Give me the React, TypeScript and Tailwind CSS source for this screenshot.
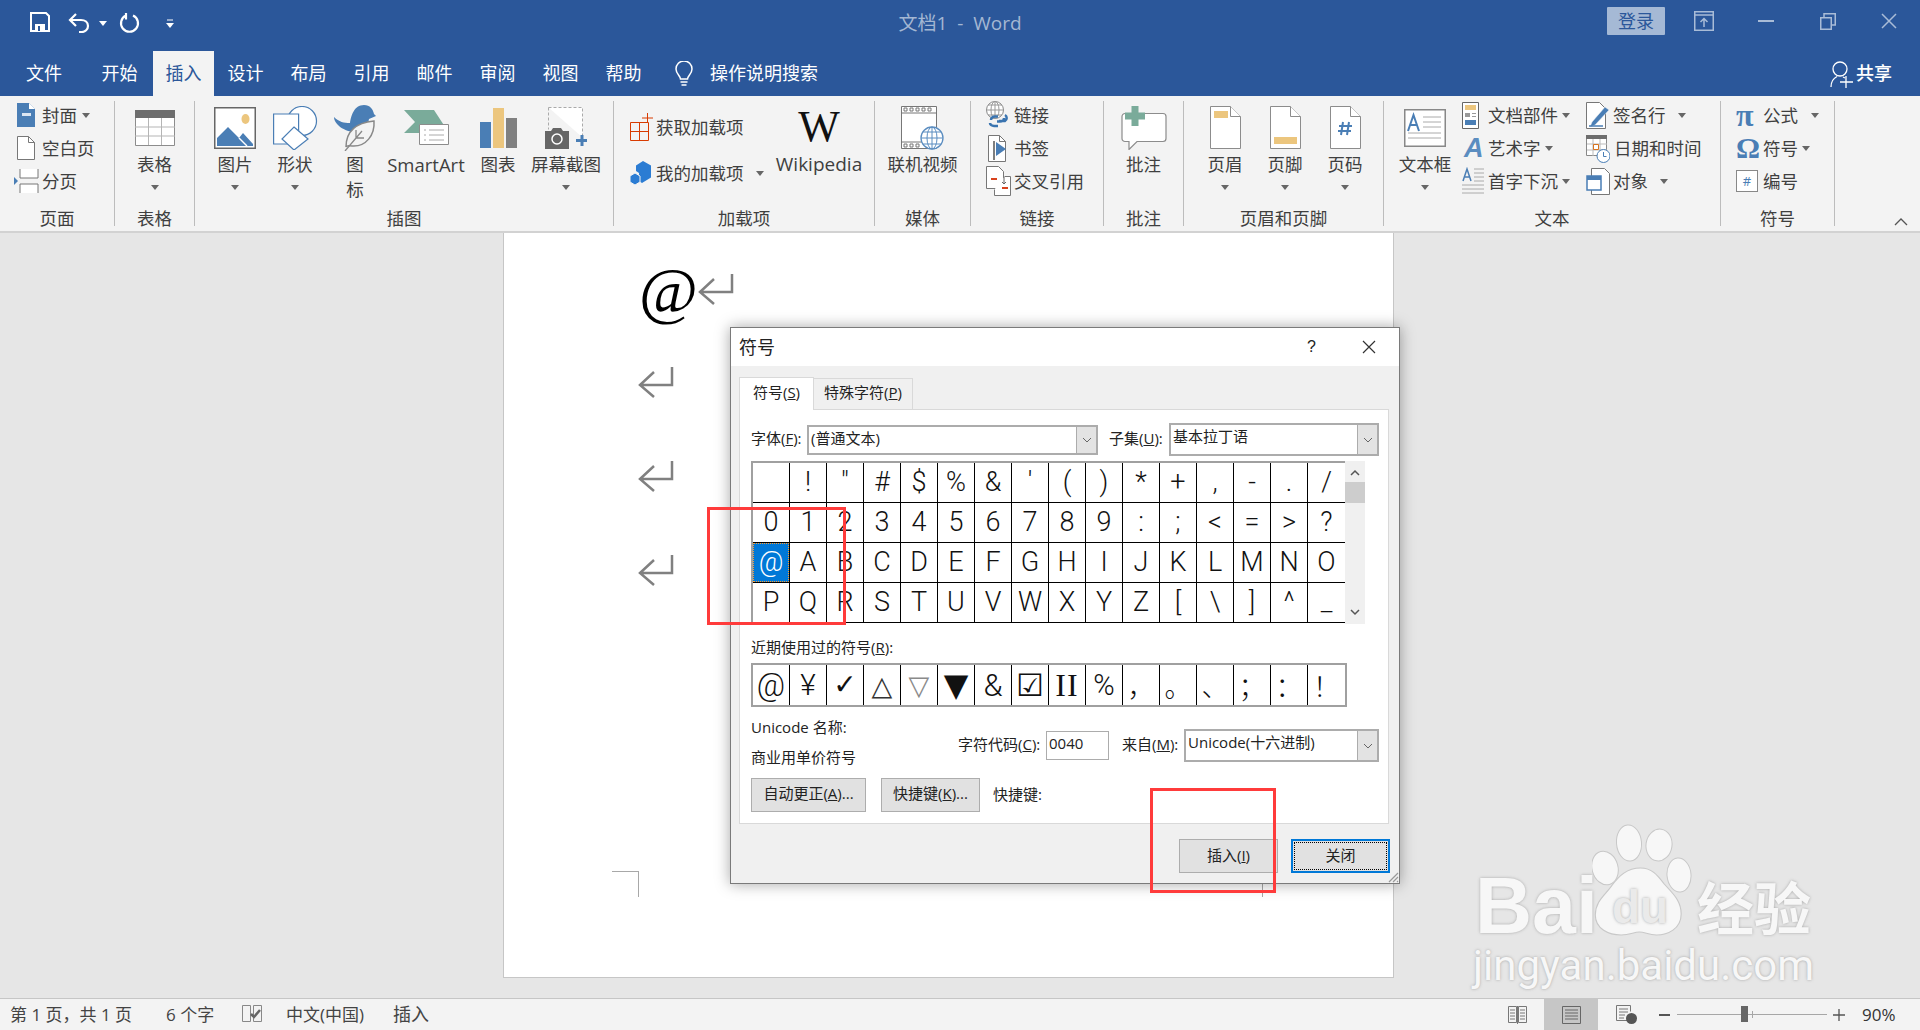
import type { ReactNode } from 'react'

const BLUE = '#4a7eb5'
const TAN = '#ecc67e'
const TEAL = '#7aab9a'
const LINE = '#8c8c8c'

function Icon({ w, h, children, className }: { w: number; h: number; children: ReactNode; className?: string }) {
  return (
    <svg width={w} height={h} viewBox={`0 0 ${w} ${h}`} fill="none" className={className}>
      {children}
    </svg>
  )
}

function Caret({ className = '' }: { className?: string }) {
  return <span className={`inline-block w-0 h-0 border-x-[4px] border-x-transparent border-t-[5px] border-t-[#666] ${className}`} />
}

function BigBtn({ w, icon, lines, arrow, textClass = '' }: { w: string; icon: ReactNode; lines: string[]; arrow?: boolean; textClass?: string }) {
  return (
    <div className={`flex flex-col items-center shrink-0 ${w}`}>
      <div className="h-[49px] flex items-center justify-center">{icon}</div>
      {lines.map((l) => (
        <div key={l} className={`h-[25px] leading-[25px] whitespace-nowrap ${textClass}`}>{l}</div>
      ))}
      {arrow && <div className="h-[20px] flex items-center"><Caret /></div>}
    </div>
  )
}

function SmallBtn({ icon, iconW, label, caret }: { icon: ReactNode; iconW: string; label: string; caret?: string }) {
  return (
    <div className="h-[30px] flex items-center whitespace-nowrap">
      <div className={`flex items-center shrink-0 ${iconW}`}>{icon}</div>
      <span>{label}</span>
      {caret && <Caret className={caret} />}
    </div>
  )
}

function Group({ w, label, children, className = '' }: { w: string; label: string; children: ReactNode; className?: string }) {
  return (
    <div className={`flex flex-col shrink-0 h-[125px] border-r border-[#bcbcbc] ${w}`}>
      <div className={`flex flex-1 min-h-0 pt-[2px] ${className}`}>{children}</div>
      <div className="h-[24px] leading-[24px] text-center -mb-[4px] relative">{label}</div>
    </div>
  )
}

function Stack({ children, w }: { children: ReactNode; w?: string }) {
  return <div className={`flex flex-col gap-[3px] -mt-[3px] shrink-0 ${w ?? ''}`}>{children}</div>
}

function PageDoc({ children }: { children?: ReactNode }) {
  return (
    <Icon w={31} h={43}>
      <path d="M.5.5h20l10 10v32H.5z" fill="#fff" stroke={LINE} />
      <path d="M20.5.5v10h10" fill="#fff" stroke={LINE} />
      {children}
    </Icon>
  )
}

const SYMBOLS = [
  ['', '!', '"', '#', '$', '%', '&', "'", '(', ')', '*', '+', ',', '-', '.', '/'],
  ['0', '1', '2', '3', '4', '5', '6', '7', '8', '9', ':', ';', '<', '=', '>', '?'],
  ['@', 'A', 'B', 'C', 'D', 'E', 'F', 'G', 'H', 'I', 'J', 'K', 'L', 'M', 'N', 'O'],
  ['P', 'Q', 'R', 'S', 'T', 'U', 'V', 'W', 'X', 'Y', 'Z', '[', '\\', ']', '^', '_'],
]

const ROBOTO = "font-['Roboto',sans-serif] font-light"
const DEJAVU = "font-['DejaVu_Sans',sans-serif]"
const CJK = "font-['Noto_Sans_CJK_SC',sans-serif] font-light"

const RECENT = [
  { c: '@', cls: `${ROBOTO} text-[31px]` },
  { c: '¥', cls: `${ROBOTO} text-[30px]` },
  { c: '✓', cls: `${DEJAVU} text-[28px]` },
  { c: '△', cls: `${DEJAVU} text-[27px] text-[#333]` },
  { c: '▽', cls: `${DEJAVU} text-[27px] text-[#8a8a8a]` },
  { c: '▼', cls: `${DEJAVU} text-[32px]` },
  { c: '&', cls: `${ROBOTO} text-[31px]` },
  { c: '☑', cls: `${DEJAVU} text-[31px]` },
  { c: 'II', cls: "font-['Liberation_Serif',serif] text-[32px] tracking-[1px]" },
  { c: '%', cls: `${ROBOTO} text-[29px]` },
  { c: '，', cls: `${CJK} text-[27px]` },
  { c: '。', cls: `${CJK} text-[27px]` },
  { c: '、', cls: `${CJK} text-[27px]` },
  { c: '；', cls: `${CJK} text-[27px]` },
  { c: '：', cls: `${CJK} text-[27px]` },
  { c: '！', cls: `${CJK} text-[27px]` },
]

function ComboBox({ w, h, text }: { w: string; h: string; text: string }) {
  return (
    <div className={`flex shrink-0 bg-white border-2 border-[#acacac] ${w} ${h}`}>
      <div className="flex-1 px-[2px] leading-[23px] whitespace-nowrap overflow-hidden">{text}</div>
      <div className="w-[20px] bg-[#e3e3e3] border-l border-[#acacac] flex items-center justify-center">
        <svg width="10" height="6" viewBox="0 0 10 6" fill="none"><path d="M1 1l4 4 4-4" stroke="#666" /></svg>
      </div>
    </div>
  )
}

function ReturnMark({ className = 'block' }: { className?: string }) {
  return (
    <Icon w={36} h={31} className={className}>
      <path d="M34 0V18H2M16 5L2 18l14 12" stroke="#808080" strokeWidth="2.5" />
    </Icon>
  )
}

export default function App() {
  return (
    <div className="relative w-[1920px] h-[1030px] overflow-hidden flex flex-col bg-[#e6e6e6] text-[#3f3f3f] font-['Open_Sans','Noto_Sans_CJK_SC',sans-serif]">
      {/* Title bar */}
      <div className="h-[51px] shrink-0 bg-[#2b579a] grid grid-cols-[1fr_auto_1fr] items-start">
        <div className="flex items-center h-[44px] pl-[30px]">
          <Icon w={20} h={20}>
            <path d="M1 1h15l3 3v15H1z" stroke="#fff" strokeWidth="2" />
            <path d="M5 12h10v7H5z" fill="#fff" />
            <path d="M8 14h2v5H8z" fill="#2b579a" />
          </Icon>
          <Icon w={24} h={21} className="ml-[18px]">
            <path d="M8 2L2 8l6 6M2 8h11c4 0 7 2.5 7 6s-3 6-6 6h-3" stroke="#fff" strokeWidth="2.2" />
          </Icon>
          <Caret className="ml-[7px] mt-[2px] !border-t-white" />
          <Icon w={21} h={21} className="ml-[12px]">
            <path d="M7 3.5a8.5 8.5 0 1 0 7 0M7 1v6.5" stroke="#fff" strokeWidth="2.2" />
          </Icon>
          <Icon w={8} h={10} className="ml-[26px] mt-[3px]">
            <path d="M1 1h6" stroke="#fff" />
            <path d="M0 4h8L4 9z" fill="#fff" />
          </Icon>
        </div>
        <div className="h-[46px] leading-[46px] text-[19px] text-[#a4b7d3]">文档1 &nbsp;-&nbsp; Word</div>
        <div className="flex items-center justify-end h-[42px] pr-[23px]">
          <div className="w-[58px] h-[28px] rounded-[1px] bg-[#a5b9d5] text-[#2b579a] text-[18px] leading-[28px] text-center">登录</div>
          <Icon w={20} h={20} className="ml-[29px]">
            <rect x=".75" y=".75" width="18.5" height="18.5" stroke="#a9bcd7" strokeWidth="1.5" />
            <path d="M1 4h18M10 16V8M6.5 11L10 7.5 13.5 11" stroke="#a9bcd7" strokeWidth="1.5" />
          </Icon>
          <div className="ml-[44px] w-[16px] h-[2px] bg-[#a9bcd7]" />
          <Icon w={16} h={17} className="ml-[46px]">
            <path d="M.75 4.75h10.5v11.5H.75zM4 4.5V.75h11.25V12h-3.5" stroke="#a9bcd7" strokeWidth="1.5" />
          </Icon>
          <Icon w={16} h={16} className="ml-[45px]">
            <path d="M1 1l14 14M15 1L1 15" stroke="#a9bcd7" strokeWidth="1.5" />
          </Icon>
        </div>
      </div>

      {/* Tabs */}
      <div className="h-[45px] shrink-0 bg-[#2b579a] flex items-center text-white text-[18px]">
        <div className="w-[86px] pl-[2px] text-center">文件</div>
        <div className="w-[67px] text-center">开始</div>
        <div className="w-[61px] h-full leading-[45px] text-center bg-[#f3f3f3] text-[#2b579a]">插入</div>
        {['设计', '布局', '引用', '邮件', '审阅', '视图', '帮助'].map((t) => (
          <div key={t} className="w-[63px] text-center">{t}</div>
        ))}
        <Icon w={18} h={26} className="ml-[20px]">
          <path d="M5.5 18c0-3-4.5-5-4.5-10a8 8 0 0 1 16 0c0 5-4.5 7-4.5 10z" stroke="#fff" strokeWidth="1.5" />
          <path d="M5.5 21h7M6.5 24h5" stroke="#fff" strokeWidth="1.5" />
        </Icon>
        <div className="ml-[17px]">操作说明搜索</div>
        <div className="ml-auto flex items-center pr-[28px]">
          <Icon w={24} h={28}>
            <circle cx="10" cy="9" r="7" stroke="#fff" strokeWidth="1.3" />
            <path d="M1 27c0-6 3-9 6-10.5M13 17l2 1M16 16v12M10 22h13" stroke="#fff" strokeWidth="1.3" />
          </Icon>
          <span className="ml-[2px] font-medium">共享</span>
        </div>
      </div>

      {/* Ribbon */}
      <div className="h-[135px] shrink-0 bg-[#f3f3f3] flex pt-[5px] text-[17.5px] relative">
        <Group w="w-[115px]" label="页面" className="pl-[14px]">
          <Stack>
            <SmallBtn iconW="w-[28px] pl-[3px]" label="封面" caret="ml-[5px]" icon={
              <Icon w={18} h={24}>
                <path d="M0 0h12l6 6v18H0z" fill={BLUE} />
                <path d="M12 0v6h6z" fill="#fff" />
                <path d="M5 10h9v3H5z" fill="#dbe6f2" />
              </Icon>
            } />
            <SmallBtn iconW="w-[28px] pl-[3px]" label="空白页" icon={
              <Icon w={18} h={24}>
                <path d="M.5.5h11l6 6v17H.5z" fill="#fff" stroke="#777" />
                <path d="M11.5.5v6h6" stroke="#777" />
              </Icon>
            } />
            <SmallBtn iconW="w-[28px]" label="分页" icon={
              <Icon w={25} h={24}>
                <path d="M6 0v9h18V0M6 24v-9h18v9" fill="#fff" stroke="#777" />
                <path d="M0 8l4 4-4 4z" fill={BLUE} />
              </Icon>
            } />
          </Stack>
        </Group>

        <Group w="w-[80px]" label="表格">
          <BigBtn w="w-[79px]" lines={['表格']} arrow icon={
            <Icon w={40} h={36}>
              <path d="M.5.5h39v35H.5z" fill="#fff" stroke="#8c8c8c" />
              <path d="M0 0h40v8H0z" fill="#6d6d6d" />
              <path d="M13.5 8v27M26.5 8v27M0 17h40M0 26h40" stroke="#b5b5b5" />
            </Icon>
          } />
        </Group>

        <Group w="w-[419px]" label="插图" className="pl-[10px]">
          <BigBtn w="w-[60px]" lines={['图片']} arrow icon={
            <Icon w={42} h={42}>
              <rect x=".75" y=".75" width="40.5" height="40.5" fill="#fff" stroke="#666" strokeWidth="1.5" />
              <ellipse cx="31.5" cy="12" rx="4" ry="5" fill={TAN} />
              <path d="M3 39v-8l11-11 11 11 4-5 10 11v2z" fill={BLUE} />
              <path d="M25 31l8 8" stroke="#fff" strokeWidth="1.5" />
            </Icon>
          } />
          <BigBtn w="w-[60px]" lines={['形状']} arrow icon={
            <Icon w={45} h={44}>
              <circle cx="29" cy="15" r="14.5" fill="#fff" stroke={BLUE} strokeWidth="1.2" />
              <path d="M.6 8h25v30H.6z" fill="#fff" stroke={BLUE} strokeWidth="1.2" />
              <path d="M21 21l14 12-14 11L9 33z" fill="#fff" stroke={BLUE} strokeWidth="1.2" />
            </Icon>
          } />
          <BigBtn w="w-[60px]" lines={['图', '标']} icon={
            <Icon w={42} h={46}>
              <path d="M30 0c6 0 9 4 10 9l2 2-7 3c-1 8-7 13-13 13C10 27 0 19 0 12c5 5 10 6 16 6 1-7 4-18 14-18z" fill={BLUE} />
              <path d="M12 42c0-14 8-24 28-26 1 14-8 26-22 25-3 0-5-1-6 1z" fill="#f3f3f3" stroke="#888" strokeWidth="1.5" />
              <path d="M11 46l17-20M22 33v-8M22 33h8" stroke="#888" strokeWidth="1.3" />
            </Icon>
          } />
          <BigBtn w="w-[82px]" lines={['SmartArt']} textClass="text-[18.5px]" icon={
            <Icon w={45} h={35}>
              <path d="M0 0h30l15 23H0l11-11z" fill={TEAL} />
              <path d="M15.5 14.5h29v20h-29z" fill="#fff" stroke="#8c8c8c" />
              <path d="M20 20h2M25 20h15M20 25h2M25 25h15M20 30h2M25 30h15" stroke="#aaa" />
            </Icon>
          } />
          <BigBtn w="w-[62px]" lines={['图表']} icon={
            <Icon w={37} h={40}>
              <path d="M0 14h11v26H0z" fill={BLUE} />
              <path d="M13 0h11v40H13z" fill={TAN} />
              <path d="M26 10h11v30H26z" fill="#808080" />
            </Icon>
          } />
          <BigBtn w="w-[74px]" lines={['屏幕截图']} arrow icon={
            <Icon w={43} h={42}>
              <path d="M3.5.5h34v30" fill="#fff" stroke="#aaa" strokeDasharray="3 2" />
              <path d="M3.5.5v22" stroke="#aaa" strokeDasharray="3 2" />
              <path d="M0 42V24h6l2-3h8l2 3h6v18z" fill="#666" />
              <circle cx="12" cy="32" r="5" fill="#666" stroke="#fff" strokeWidth="1.5" />
              <path d="M37 28v11M31 33.5h11" stroke={BLUE} strokeWidth="3" />
            </Icon>
          } />
        </Group>

        <Group w="w-[261px]" label="加载项" className="pl-[16px]">
          <div className="flex flex-col w-[144px] shrink-0 pt-[9px] gap-[16px]">
            <div className="h-[30px] flex items-center">
              <Icon w={23} h={28} className="mr-[3px]">
                <path d="M.5 9.5h18v18H.5zM9.5 9.5v18M.5 18.5h18" stroke="#d83b01" />
                <path d="M17.5 0v10M12 5h11" stroke="#d83b01" />
              </Icon>
              <span>获取加载项</span>
            </div>
            <div className="h-[30px] flex items-center">
              <Icon w={22} h={25} className="mr-[4px]">
                <path d="M13 0l8 4.5v12L12 22l-3-2v-8l-3-2V4.5z" fill="#2b7cd3" />
                <path d="M5 12l5 3v6l-5 3-5-3v-6z" fill="#2b7cd3" stroke="#f3f3f3" />
              </Icon>
              <span>我的加载项</span>
              <Caret className="ml-[12px]" />
            </div>
          </div>
          <BigBtn w="w-[90px]" lines={['Wikipedia']} textClass="text-[19px]" icon={
            <span className="block font-['Liberation_Serif',serif] text-[44px] leading-[44px] text-[#111] mt-[-2px]">W</span>
          } />
        </Group>

        <Group w="w-[96px]" label="媒体">
          <BigBtn w="w-[95px]" lines={['联机视频']} icon={
            <Icon w={43} h={44}>
              <path d="M.5.5h35v42H.5z" fill="#fff" stroke="#777" />
              <path d="M1 7h35M1 36h35" stroke="#777" />
              <path d="M3 2h3v3H3zM9 2h3v3H9zM15 2h3v3h-3zM21 2h3v3h-3zM27 2h3v3h-3zM3 38h3v3H3zM9 38h3v3H9zM15 38h3v3h-3z" stroke="#777" />
              <circle cx="31" cy="32" r="11" fill="#fff" stroke="#5b8dc0" strokeWidth="1.3" />
              <path d="M20 32h22M31 21v22M22.5 26h17M22.5 38h17" stroke="#5b8dc0" />
              <ellipse cx="31" cy="32" rx="5" ry="11" stroke="#5b8dc0" />
            </Icon>
          } />
        </Group>

        <Group w="w-[133px]" label="链接" className="pl-[15px]">
          <Stack>
            <SmallBtn iconW="w-[28px]" label="链接" icon={
              <Icon w={23} h={28}>
                <circle cx="9" cy="9" r="8.5" fill="#fff" stroke="#888" />
                <path d="M0 9h18M9 0v18M2 4h14M2 14h14" stroke="#999" />
                <ellipse cx="9" cy="9" rx="4" ry="8.5" stroke="#999" />
                <path d="M5 19a4 3.5 0 0 1 4-3.5h3M18 17a4 3.5 0 0 1-4 3.5h-3M4 22a4 3 0 0 0 4 3h4M13 20h6a3.5 3.5 0 0 0 0-6" stroke="#3a74b0" strokeWidth="2.5" />
              </Icon>
            } />
            <SmallBtn iconW="w-[28px] pl-[2px]" label="书签" icon={
              <Icon w={18} h={27}>
                <path d="M.5.5h11l6 6v20H.5z" fill="#fff" stroke="#777" />
                <path d="M11.5.5v6h6" stroke="#777" />
                <path d="M6 6v19" stroke="#555" strokeWidth="1.5" />
                <path d="M8 7l10 7-10 7z" fill={BLUE} />
              </Icon>
            } />
            <SmallBtn iconW="w-[28px]" label="交叉引用" icon={
              <Icon w={25} h={30}>
                <path d="M.5.5h12l5 5v17H.5z" fill="#fff" stroke="#777" />
                <path d="M8.5 23.5v6h16v-19h-6" stroke="#777" fill="#fff" />
                <path d="M5 13h6M16 22h6" stroke="#d8431e" strokeWidth="2" />
                <path d="M18 11v7M16 16l2 2 2-2" stroke="#666" />
              </Icon>
            } />
          </Stack>
        </Group>

        <Group w="w-[80px]" label="批注">
          <BigBtn w="w-[79px]" lines={['批注']} icon={
            <Icon w={46} h={44}>
              <path d="M4 7.5h38a3 3 0 0 1 3 3v22a3 3 0 0 1-3 3H16l-8 8v-8H4a3 3 0 0 1-3-3v-22a3 3 0 0 1 3-3z" fill="#fff" stroke="#8c8c8c" strokeWidth="1.2" />
              <path d="M14 0v20M4 10h20" stroke={TEAL} strokeWidth="7" />
            </Icon>
          } />
        </Group>

        <Group w="w-[200px]" label="页眉和页脚" className="pl-[11px]">
          <BigBtn w="w-[60px]" lines={['页眉']} arrow icon={
            <PageDoc><path d="M4 5h14v7H4z" fill={TAN} /></PageDoc>
          } />
          <BigBtn w="w-[60px]" lines={['页脚']} arrow icon={
            <PageDoc><path d="M4 31h23v7H4z" fill={TAN} /></PageDoc>
          } />
          <BigBtn w="w-[60px]" lines={['页码']} arrow icon={
            <PageDoc>
              <path d="M13 16l-2 13M19 16l-2 13M9 20h13M8 25h13" stroke={BLUE} strokeWidth="2" />
            </PageDoc>
          } />
        </Group>

        <Group w="w-[337px]" label="文本" className="pl-[4px]">
          <BigBtn w="w-[74px]" lines={['文本框']} arrow icon={
            <Icon w={42} h={38}>
              <path d="M.75.75h40.5v36.5H.75z" fill="#fff" stroke="#888" strokeWidth="1.5" />
              <path d="M4 22L9.5 6l5.5 16M6 16h7" stroke={BLUE} strokeWidth="2" />
              <path d="M19 8h18M19 13h18M19 18h18M4 24h33M4 29h33" stroke="#aaa" />
            </Icon>
          } />
          <Stack w="w-[124px]">
            <SmallBtn iconW="w-[26px]" label="文档部件" caret="ml-[4px]" icon={
              <Icon w={17} h={27}>
                <path d="M.5.5h16v26H.5z" fill="#fff" stroke="#666" />
                <path d="M3 3h11v5H3z" fill={TAN} />
                <path d="M3 11h5v4H3zM10 11h4v1h-4zM10 14h4v1h-4z" fill="#999" />
                <path d="M3 18h11v5H3z" fill={BLUE} />
              </Icon>
            } />
            <SmallBtn iconW="w-[26px] pl-[2px]" label="艺术字" caret="ml-[4px]" icon={
              <span className="font-['Liberation_Sans',sans-serif] italic font-bold text-[27px] leading-[27px] text-[#5b8dc0]">A</span>
            } />
            <SmallBtn iconW="w-[26px]" label="首字下沉" caret="ml-[4px]" icon={
              <Icon w={22} h={28}>
                <path d="M1 14L5 2l4 12M2.5 10h5" stroke={BLUE} strokeWidth="1.5" />
                <path d="M12 2h10M12 6h10M12 10h10M12 14h10M0 18h22M0 22h22M0 26h22" stroke="#aaa" />
              </Icon>
            } />
          </Stack>
          <Stack>
            <SmallBtn iconW="w-[27px]" label="签名行" caret="ml-[12px]" icon={
              <Icon w={24} h={27}>
                <path d="M.5.5h13l6 6v20H.5z" fill="#fff" stroke="#777" />
                <path d="M4 25l2-5L19 5l4 3L9 23z" fill={BLUE} stroke="#f3f3f3" strokeWidth=".5" />
                <path d="M3 24h14" stroke={BLUE} strokeWidth="1.5" />
              </Icon>
            } />
            <SmallBtn iconW="w-[28px]" label="日期和时间" icon={
              <Icon w={24} h={30}>
                <path d="M.5 2.5h20v20H.5z" fill="#fff" stroke="#888" />
                <path d="M0 2h21v4H0z" fill="#6d6d6d" />
                <path d="M7 6v17M14 6v17M1 11h20M1 17h20" stroke="#bbb" />
                <path d="M7.5 11.5h5v5h-5z" stroke="#d8731e" />
                <circle cx="17.5" cy="23" r="6.5" fill="#fff" stroke={BLUE} />
                <path d="M17.5 19v4.5h3" stroke={BLUE} />
              </Icon>
            } />
            <SmallBtn iconW="w-[27px]" label="对象" caret="ml-[12px]" icon={
              <Icon w={24} h={27}>
                <path d="M5.5.5h13l5 5v21h-18z" fill="#fff" stroke="#777" />
                <path d="M1 8h14v14H1z" fill="#fff" stroke={BLUE} strokeWidth="1.5" />
                <path d="M1 8h14v4H1z" fill={BLUE} />
              </Icon>
            } />
          </Stack>
        </Group>

        <Group w="w-[114px]" label="符号" className="pl-[15px]">
          <Stack>
            <SmallBtn iconW="w-[27px]" label="公式" caret="ml-[13px]" icon={
              <span className="font-['Liberation_Serif',serif] font-bold text-[32px] leading-[30px] text-[#4a7eb5]">π</span>
            } />
            <SmallBtn iconW="w-[27px]" label="符号" caret="ml-[4px]" icon={
              <span className="font-['Liberation_Serif',serif] font-bold text-[30px] leading-[30px] text-[#4a7eb5]">Ω</span>
            } />
            <SmallBtn iconW="w-[27px]" label="编号" icon={
              <span className="flex items-center justify-center w-[22px] h-[22px] bg-white border border-[#888] text-[13px] leading-[13px] text-[#4a7eb5]">#</span>
            } />
          </Stack>
        </Group>

        <div className="flex-1 flex items-end justify-end pr-[12px] pb-[5px]">
          <Icon w={14} h={9}><path d="M1 8l6-6 6 6" stroke="#555" strokeWidth="1.3" /></Icon>
        </div>
      </div>

      {/* Document area */}
      <div className="flex-1 min-h-0 pl-[503px] border-t-2 border-[#d2d2d2]">
        <div className="w-[891px] h-[745px] bg-white border-x border-b border-[#c6c6c6] pt-[37px] pl-[135px] box-border">
          <div className="flex items-start h-[54px]">
            <span className="w-[59px] -mt-[9px] font-['Liberation_Serif',serif] text-[64px] leading-[60px] text-black">@</span>
            <ReturnMark className="block mt-[4px] shrink-0" />
          </div>
          <div className="flex flex-col gap-[63px] mt-[43px] -ml-[1px]">
            <ReturnMark />
            <ReturnMark />
            <ReturnMark />
          </div>
          <div className="flex mt-[285px] -ml-[27px]">
            <div className="w-[27px] h-[26px] border-t border-r border-[#a8a8a8]" />
            <div className="w-[26px] h-[26px] ml-[623px] border-t border-l border-[#a8a8a8]" />
          </div>
        </div>
      </div>

      {/* Status bar */}
      <div className="h-[32px] shrink-0 bg-[#f3f3f3] border-t border-[#c6c6c6] flex items-center text-[17px] text-[#444]">
        <div className="w-[166px] pl-[10px] whitespace-nowrap">第 1 页，共 1 页</div>
        <div className="w-[76px] whitespace-nowrap">6 个字</div>
        <div className="w-[44px]">
          <Icon w={21} h={19}>
            <path d="M.5.5h8v16h-8zM11.5.5h8v16h-8z" stroke="#888" />
            <path d="M9 9l3 3 6-7" stroke="#666" strokeWidth="2.5" />
          </Icon>
        </div>
        <div className="w-[107px] whitespace-nowrap">中文(中国)</div>
        <div className="text-[18px]">插入</div>
        <div className="ml-auto flex items-center h-full pr-[25px]">
          <Icon w={19} h={18} className="mr-[17px]">
            <path d="M.5.5h8v16h-8zM10.5.5h8v16h-8zM9.5 0v18M2 4h5M2 7h5M2 10h5M2 13h5M12 4h5M12 7h5M12 10h5M12 13h5" stroke="#777" />
          </Icon>
          <div className="w-[54px] h-full bg-[#c6c6c6] flex items-center justify-center">
            <Icon w={19} h={18}>
              <path d="M.5.5h18v17H.5zM3 4h13M3 7h13M3 10h13M3 13h13" stroke="#666" />
            </Icon>
          </div>
          <Icon w={21} h={19} className="ml-[18px]">
            <path d="M12 15.500H.5V.5h14v6M3 4h9M3 7h9M3 10h6M3 13h5" stroke="#777" />
            <circle cx="15.5" cy="13.5" r="5.5" fill="#555" />
          </Icon>
          <div className="ml-[22px] w-[11px] h-[2px] bg-[#555]" />
          <div className="ml-[7px] w-[150px] h-[1px] bg-[#a6a6a6] relative">
            <div className="absolute left-[64px] -top-[8px] w-[7px] h-[16px] bg-[#666]" />
            <div className="absolute left-[75px] -top-[3px] w-[1px] h-[7px] bg-[#a6a6a6]" />
          </div>
          <Icon w={12} h={12} className="ml-[6px]">
            <path d="M6 0v12M0 6h12" stroke="#555" strokeWidth="1.3" />
          </Icon>
          <div className="ml-[17px] w-[33px] text-[17px] text-[#333] whitespace-nowrap">90%</div>
        </div>
      </div>

      {/* Symbol dialog */}
      <div className="absolute left-[730px] top-[327px] w-[670px] h-[557px] flex flex-col border border-[#7a7a7a] bg-[#f0f0f0] shadow-[0_0_14px_rgba(0,0,0,0.35)] text-[15px] text-[#222]">
        <div className="h-[38px] shrink-0 bg-white flex items-center pl-[8px] text-[18px]">
          <span>符号</span>
          <span className="ml-auto text-[16px] mr-[46px] font-['Liberation_Sans',sans-serif]">?</span>
          <Icon w={14} h={14} className="mr-[23px]"><path d="M1 1l12 12M13 1L1 13" stroke="#333" strokeWidth="1.2" /></Icon>
        </div>
        <div className="flex-1 flex flex-col pl-[8px] pr-[10px] pt-[10px]">
          <div className="flex items-end h-[33px] shrink-0">
            <div className="w-[75px] h-[33px] leading-[29px] text-center bg-white border border-b-0 border-[#d9d9d9] relative -mb-px z-10 whitespace-nowrap">符号(<u>S</u>)</div>
            <div className="w-[99px] h-[31px] leading-[27px] text-center bg-[#f0f0f0] border border-l-0 border-b-0 border-[#d9d9d9] whitespace-nowrap">特殊字符(<u>P</u>)</div>
          </div>
          <div className="h-[415px] shrink-0 bg-white border border-[#d9d9d9] pl-[11px] pt-[13px]">
            <div className="flex items-center h-[33px]">
              <span className="w-[56px] shrink-0 whitespace-nowrap -mt-[3px]">字体(<u>F</u>):</span>
              <ComboBox w="w-[291px]" h="h-[30px]" text="(普通文本)" />
              <span className="w-[60px] ml-[11px] shrink-0 whitespace-nowrap -mt-[2px]">子集(<u>U</u>):</span>
              <ComboBox w="w-[210px]" h="h-[33px]" text="基本拉丁语" />
            </div>
            <div className="flex mt-[5px]">
              <div className="w-[594px] h-[163px] border-l-2 border-t-2 border-[#a0a0a0] overflow-hidden shrink-0">
                <div className="grid grid-cols-[repeat(16,37px)] auto-rows-[40px] font-['Roboto','Liberation_Sans',sans-serif] font-light text-[27px] text-[#111]">
                  {SYMBOLS.flat().map((c, i) => (
                    <div key={i} className={`flex items-center justify-center border-b border-black leading-none ${i % 16 === 15 ? '' : 'border-r'}`}>
                      {c === '@' ? (
                        <span className="w-[36px] h-[39px] flex items-center justify-center bg-[#0078d7] text-white border border-dotted border-[#ff9d2e]">@</span>
                      ) : c}
                    </div>
                  ))}
                </div>
              </div>
              <div className="w-[20px] h-[163px] bg-[#f0f0f0] flex flex-col items-center">
                <Icon w={10} h={7} className="mt-[8px]"><path d="M1 6l4-4 4 4" stroke="#555" strokeWidth="1.5" /></Icon>
                <div className="w-full h-[21px] bg-[#cdcdcd] mt-[6px]" />
                <Icon w={10} h={7} className="mt-auto mb-[8px]"><path d="M1 1l4 4 4-4" stroke="#555" strokeWidth="1.5" /></Icon>
              </div>
            </div>
            <div className="mt-[13px] h-[24px] leading-[21px]">近期使用过的符号(<u>R</u>):</div>
            <div className="mt-[2px] w-[596px] h-[44px] border-2 border-[#a0a0a0] grid grid-cols-[repeat(16,37px)] text-[#111] overflow-hidden">
              {RECENT.map(({ c, cls }, i) => (
                <div key={i} className={`flex items-center justify-center leading-none ${i < 15 ? 'border-r border-black' : ''} ${cls}`}>{c}</div>
              ))}
            </div>
            <div className="flex mt-[10px]">
              <div className="w-[207px] shrink-0">
                <div className="h-[24px] leading-[21px] whitespace-nowrap">Unicode 名称:</div>
                <div className="h-[24px] leading-[22px] mt-[5px] whitespace-nowrap">商业用单价符号</div>
              </div>
              <div className="flex items-center h-[33px] mt-[12px]">
                <span className="w-[88px] shrink-0 whitespace-nowrap -mt-[2px]">字符代码(<u>C</u>):</span>
                <div className="w-[63px] h-[29px] bg-white border border-[#acacac] px-[2px] leading-[22px]">0040</div>
                <span className="w-[62px] ml-[13px] shrink-0 whitespace-nowrap -mt-[2px]">来自(<u>M</u>):</span>
                <ComboBox w="w-[195px]" h="h-[33px]" text="Unicode(十六进制)" />
              </div>
            </div>
            <div className="flex items-center mt-[8px]">
              <div className="w-[115px] h-[34px] leading-[29px] text-center bg-[#e1e1e1] border border-[#adadad] whitespace-nowrap">自动更正(<u>A</u>)...</div>
              <div className="w-[99px] h-[34px] leading-[29px] text-center bg-[#e1e1e1] border border-[#adadad] ml-[15px] whitespace-nowrap">快捷键(<u>K</u>)...</div>
              <span className="ml-[13px] -mt-[2px]">快捷键:</span>
            </div>
          </div>
          <div className="flex justify-end gap-[13px] mt-[15px] -mr-[1px]">
            <div className="w-[99px] h-[34px] leading-[30px] text-center bg-[#e1e1e1] border border-[#adadad]">插入(<u>I</u>)</div>
            <div className="w-[99px] h-[34px] bg-[#e1e1e1] border-2 border-[#0078d7] p-[1px]">
              <div className="h-full leading-[24px] text-center border border-dotted border-black">关闭</div>
            </div>
          </div>
        </div>
        <Icon w={12} h={12} className="absolute right-0 bottom-0">
          <path d="M11 2L2 11M11 6l-5 5M11 10l-1 1" stroke="#999" strokeWidth="1.2" />
        </Icon>
      </div>

      {/* Annotation frames */}
      <div className="absolute left-[707px] top-[507px] w-[139px] h-[118px] border-[3px] border-[#ff3b3b]" />
      <div className="absolute left-[1150px] top-[788px] w-[126px] h-[105px] border-[3px] border-[#ff3b3b]" />

      {/* Watermark */}
      <div className="absolute left-[1470px] top-[820px] w-[350px] h-[175px] text-[#f7f7f7] [text-shadow:0_0_3px_rgba(120,120,120,0.6)]">
        <span className="absolute left-[5px] top-[55px] font-['Liberation_Sans',sans-serif] font-bold text-[79px] leading-[62px]">Bai</span>
        <svg width="100" height="120" viewBox="0 0 100 120" className="absolute left-[122px] top-0" fill="#f7f7f7" stroke="#c8c8c8">
          <ellipse cx="13" cy="48" rx="13" ry="17" transform="rotate(-15 13 48)" />
          <ellipse cx="37" cy="23" rx="12.5" ry="18" transform="rotate(-5 37 23)" />
          <ellipse cx="67" cy="25" rx="13" ry="16" transform="rotate(8 67 25)" />
          <ellipse cx="87" cy="55" rx="12" ry="17" transform="rotate(-5 87 55)" />
          <path transform="matrix(1.13 0 0 1 -8 7)" d="M50 41c10 0 15 7 21 16 7 9 15 16 15 30 0 15-12 21-22 21-7 0-10-3-15-3s-8 3-16 3C22 108 10 102 10 88c0-14 9-20 15-30 6-9 13-17 25-17z" />
        </svg>
        <span className="absolute left-[142px] top-[64px] font-['Liberation_Sans',sans-serif] font-bold text-[46px] leading-[46px] text-[#eaeaea]">du</span>
        <span className="absolute left-[227px] top-[55px] font-['Noto_Sans_CJK_SC',sans-serif] font-bold text-[57px] leading-[60px] whitespace-nowrap">经验</span>
        <span className="absolute left-[3px] top-[123px] font-['Roboto',sans-serif] text-[42px] leading-[46px] whitespace-nowrap">jingyan.baidu.com</span>
      </div>
    </div>
  )
}
